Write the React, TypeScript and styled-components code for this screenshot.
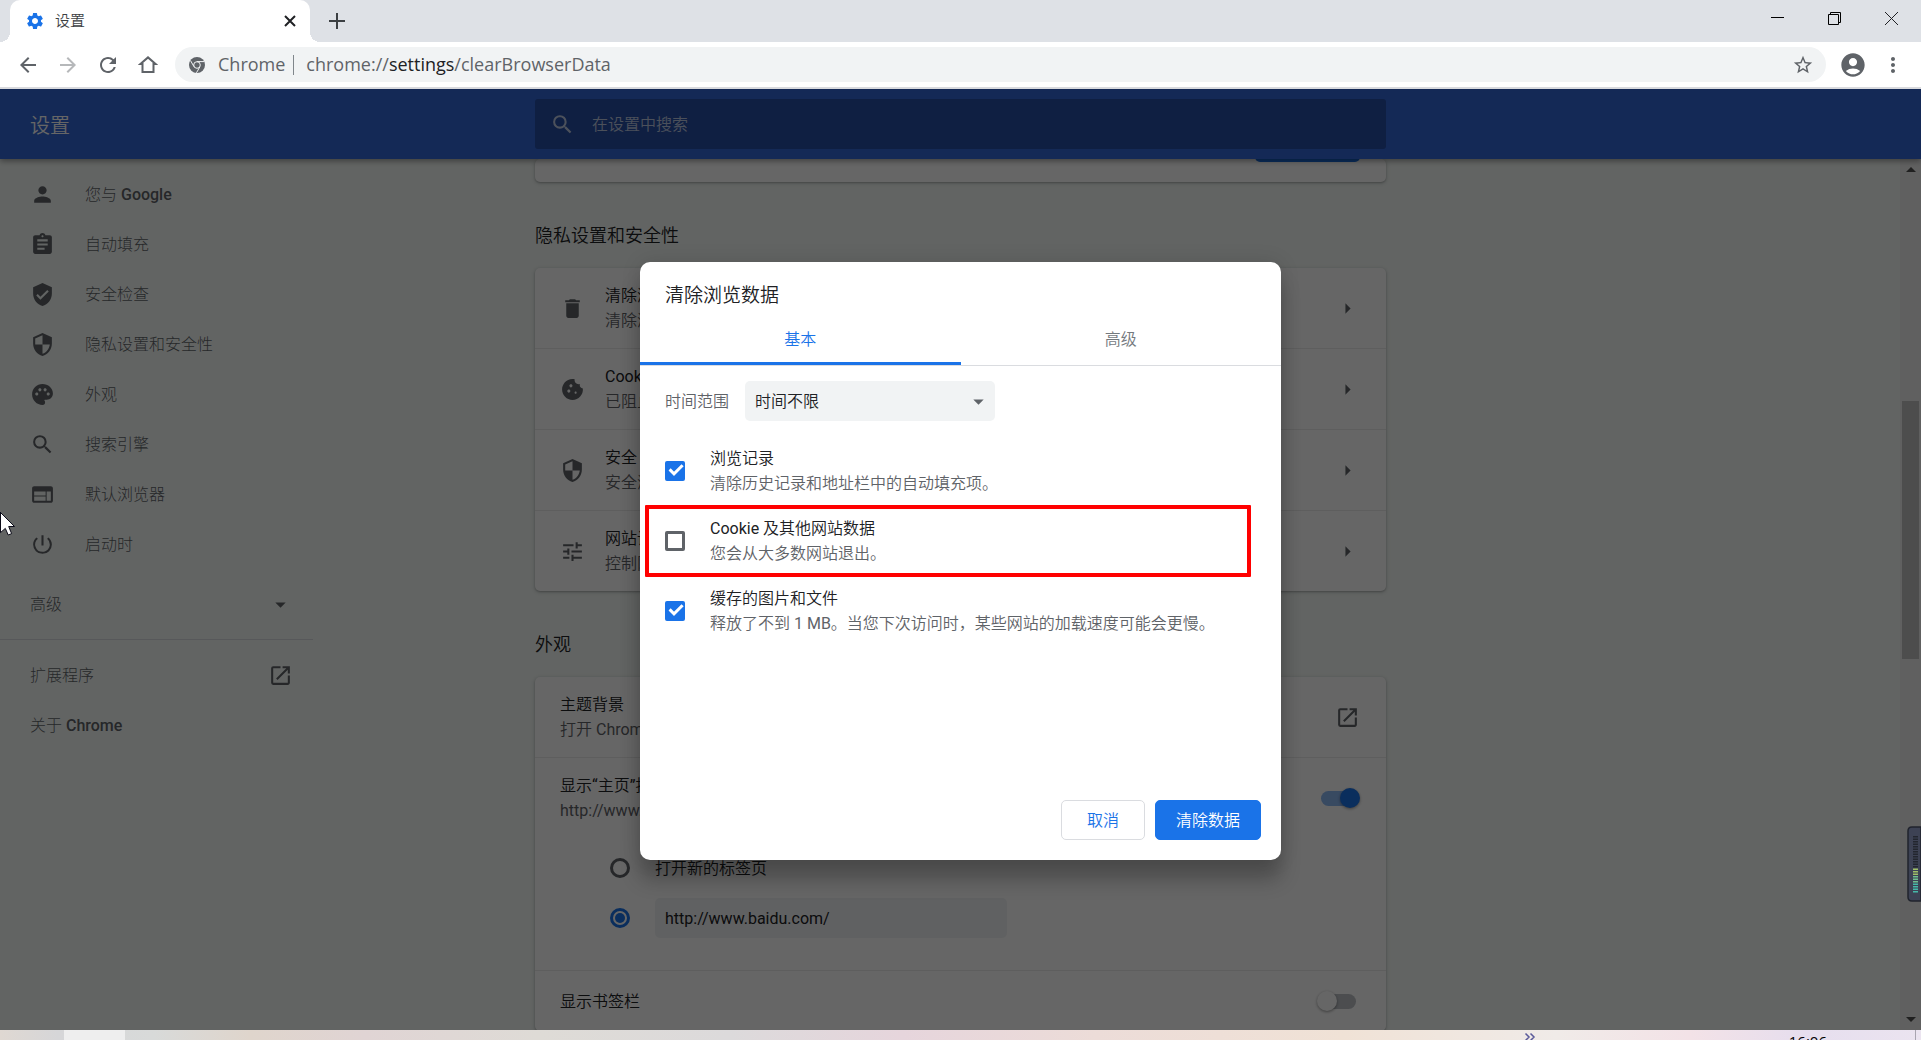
import React from "react";
import styled, { createGlobalStyle, css } from "styled-components";
import type { IconType } from "react-icons";
import {
  MdAccountCircle,
  MdArrowBack,
  MdArrowDropDown,
  MdArrowForward,
  MdArrowRight,
  MdAssignment,
  MdCookie,
  MdDelete,
  MdMoreVert,
  MdOpenInNew,
  MdPalette,
  MdPerson,
  MdPowerSettingsNew,
  MdRefresh,
  MdSearch,
  MdSecurity,
  MdSettings,
  MdStarBorder,
  MdTune,
  MdVerifiedUser,
  MdWeb,
} from "react-icons/md";

const color = {
  strip: "#dee1e6",
  chip: "#f1f3f4",
  ink: "#202124",
  muted: "#5f6368",
  blue: "#1a73e8",
  header: "#3367d6",
  page: "#f6fbf8",
  line: "#dadce0",
  rule: "#ececec",
};

const lightFont = `Roboto, "Noto Sans CJK SC Light", "Noto Sans CJK SC", sans-serif`;

const GlobalStyle = createGlobalStyle`
  *, *::before, *::after { box-sizing: border-box; }
  html, body, #root { height: 100%; }
  body {
    margin: 0;
    overflow: hidden;
    font-family: Roboto, "Noto Sans CJK SC DemiLight", "Noto Sans CJK SC", sans-serif;
    font-size: 16px;
    line-height: 25px;
    color: ${color.ink};
  }
  button, input, select { font: inherit; color: inherit; margin: 0; }
  button { padding: 0; border: 0; background: none; }
  h1, h2, p, ul { margin: 0; padding: 0; font-weight: 400; }
  ul { list-style: none; }
  svg { display: block; flex: none; }
`;

const Window = styled.div`
  position: relative;
  display: flex;
  flex-direction: column;
  height: 100vh;
  overflow: hidden;
`;

/* ---------- browser frame ---------- */

const TabStrip = styled.div`
  display: flex;
  flex: none;
  height: 42px;
  padding: 0 1px 0 10px;
  background: ${color.strip};
`;

const Tab = styled.div`
  position: relative;
  display: flex;
  align-items: center;
  gap: 10px;
  width: 300px;
  padding: 0 10px 0 15px;
  border-radius: 10px 10px 0 0;
  background: #fff;
  color: #3c4043;
  font-size: 15px;
  &::before,
  &::after {
    content: "";
    position: absolute;
    bottom: 0;
    width: 10px;
    height: 10px;
  }
  &::before {
    right: 100%;
    background: radial-gradient(circle at 0 0, transparent 10px, #fff 10px);
  }
  &::after {
    left: 100%;
    background: radial-gradient(circle at 100% 0, transparent 10px, #fff 10px);
  }
`;

const TabTitle = styled.span`
  flex: 1;
`;

const StripButton = styled.button<{ $width: number }>`
  display: grid;
  place-items: center;
  width: ${(p) => p.$width}px;
  height: ${(p) => (p.$width > 40 ? 36 : 42)}px;
`;

const NewTab = styled(StripButton)`
  margin-left: 12px;
`;

const WindowControls = styled.div`
  display: flex;
  margin-left: auto;
`;

const Toolbar = styled.div`
  display: flex;
  align-items: center;
  flex: none;
  height: 47px;
  padding: 0 8px;
  background: #fff;
  border-bottom: 2px solid #d9dade;
  color: ${color.muted};
`;

const ToolButton = styled.button<{ $faded?: boolean }>`
  display: grid;
  place-items: center;
  width: 40px;
  height: 40px;
  opacity: ${(p) => (p.$faded ? 0.45 : 1)};
`;

const Omnibox = styled.div`
  display: flex;
  align-items: center;
  flex: 1;
  height: 35px;
  margin: 0 7px;
  padding: 0 12px 0 14px;
  border-radius: 18px;
  background: ${color.chip};
  font-family: "Open Sans", "Noto Sans", sans-serif;
  font-size: 18px;
`;

const SiteName = styled.span`
  margin: 0 8px 0 13px;
`;

const SiteDivider = styled.span`
  width: 1px;
  height: 20px;
  margin-right: 12px;
  background: #80868b;
`;

const Url = styled.span`
  flex: 1;
  b {
    font-weight: 400;
    color: ${color.ink};
  }
`;

/* ---------- settings page ---------- */

const Page = styled.div`
  position: relative;
  display: flex;
  flex-direction: column;
  flex: 1;
  min-height: 0;
  overflow: hidden;
  background: ${color.page};
`;

const columns = css`
  display: grid;
  grid-template-columns: minmax(0, 1fr) minmax(0, 851px) minmax(0, 1fr);
`;

const Header = styled.header`
  ${columns}
  position: relative;
  z-index: 1;
  flex: none;
  align-items: center;
  height: 70px;
  background: ${color.header};
  box-shadow: 0 2px 6px rgba(0, 0, 0, 0.4);
  color: #fff;
`;

const PageTitle = styled.h1`
  padding: 4px 0 0 30px;
  font-size: 20px;
`;

const SearchBox = styled.label`
  display: flex;
  align-items: center;
  gap: 15px;
  height: 50px;
  padding: 0 15px;
  border-radius: 3px;
  background: #264ea5;
  color: rgba(255, 255, 255, 0.7);
  input {
    flex: 1;
    border: 0;
    outline: 0;
    background: none;
  }
  input::placeholder {
    color: inherit;
    opacity: 1;
  }
`;

const Body = styled.div`
  ${columns}
  flex: 1;
  min-height: 0;
`;

const Sidebar = styled.nav`
  width: 313px;
  padding-top: 10px;
  color: ${color.muted};
  font-family: ${lightFont};
  font-weight: 500;
`;

const NavLink = styled.a`
  display: flex;
  align-items: center;
  gap: 30px;
  height: 50px;
  padding: 0 20px 0 30px;
  color: inherit;
  text-decoration: none;
`;

const NavToggle = styled.button`
  display: flex;
  align-items: center;
  justify-content: space-between;
  width: 100%;
  height: 50px;
  margin: 10px 0;
  padding: 0 20px 0 30px;
  font-weight: 500;
`;

const NavFooter = styled.div`
  padding-top: 10px;
  border-top: 1px solid ${color.line};
  ${NavLink} {
    justify-content: space-between;
  }
`;

const Main = styled.main`
  height: 100%;
  min-height: 0;
`;

const Card = styled.section`
  border-radius: 5px;
  background: #fff;
  box-shadow: 0 1px 2px rgba(60, 64, 67, 0.3), 0 1px 4px 1px rgba(60, 64, 67, 0.15);
`;

const AccountCard = styled(Card)`
  display: flex;
  align-items: flex-end;
  justify-content: flex-end;
  height: 23px;
  padding: 0 26px 20px;
`;

const AccountButton = styled.button`
  flex: none;
  width: 105px;
  height: 40px;
  border-radius: 5px;
  background: ${color.blue};
`;

const SectionTitle = styled.h2`
  padding: 41px 0 19px;
  font-size: 18px;
  line-height: 26px;
`;

const Row = styled.div<{ $height?: number }>`
  display: flex;
  align-items: center;
  gap: 20px;
  height: ${(p) => p.$height ?? 80}px;
  padding: 0 26px 0 25px;
`;

const Item = styled.div`
  & + & {
    border-top: 1px solid ${color.rule};
  }
`;

const RowText = styled.div`
  flex: 1;
  p + p {
    color: ${color.muted};
  }
`;

const RowIcon = styled.span`
  color: ${color.muted};
`;

const Switch = styled.input`
  appearance: none;
  position: relative;
  width: 35px;
  height: 15px;
  margin-right: 4px;
  border-radius: 8px;
  background: #bdc1c6;
  &::after {
    content: "";
    position: absolute;
    top: -3px;
    left: -4px;
    width: 20px;
    height: 20px;
    border-radius: 50%;
    background: #fff;
    box-shadow: 0 1px 3px rgba(0, 0, 0, 0.4);
  }
  &:checked {
    background: #8cb8f3;
  }
  &:checked::after {
    left: 19px;
    background: ${color.blue};
  }
`;

const RadioList = styled.div`
  padding: 5px 0 27px 75px;
`;

const RadioRow = styled.div`
  display: flex;
  align-items: center;
  gap: 25px;
  height: 50px;
`;

const Radio = styled.input`
  appearance: none;
  display: grid;
  place-items: center;
  width: 20px;
  height: 20px;
  border: 3px solid ${color.muted};
  border-radius: 50%;
  &:checked {
    border-color: ${color.blue};
  }
  &:checked::after {
    content: "";
    width: 10px;
    height: 10px;
    border-radius: 50%;
    background: ${color.blue};
  }
`;

const UrlField = styled.input`
  width: 352px;
  height: 40px;
  padding: 0 10px;
  border: 0;
  border-radius: 5px;
  background: ${color.chip};
`;

const Scrollbar = styled.div`
  display: flex;
  flex-direction: column;
  align-items: center;
  justify-self: end;
  width: 21px;
  height: 100%;
  background: #f1f1f1;
  color: #505050;
`;

const Track = styled.div`
  display: grid;
  grid-template-rows: 221fr 258fr 350fr;
  flex: 1;
  width: 17px;
`;

const Thumb = styled.div`
  grid-row: 2;
  background: #c1c1c1;
`;

const ScrollArrow = styled.span`
  display: grid;
  place-items: center;
  height: 21px;
`;

/* ---------- dialog ---------- */

const Scrim = styled.div`
  position: absolute;
  inset: 0;
  z-index: 2;
  display: flex;
  align-items: flex-start;
  justify-content: center;
  padding-top: 173px;
  background: rgba(0, 0, 0, 0.6);
`;

const Dialog = styled.div`
  display: flex;
  flex-direction: column;
  width: 641px;
  min-height: 598px;
  border-radius: 10px;
  background: #fff;
  box-shadow: 0 0 20px rgba(0, 0, 0, 0.12), 0 20px 20px rgba(0, 0, 0, 0.24);
`;

const DialogTitle = styled.h2`
  padding: 21px 25px 9px;
  font-size: 19px;
  line-height: 26px;
`;

const Tabs = styled.div`
  display: flex;
  border-bottom: 1px solid ${color.line};
`;

const TabButton = styled.button<{ $active?: boolean }>`
  flex: 1;
  height: 47px;
  padding-bottom: 5px;
  color: ${(p) => (p.$active ? color.blue : "#74797e")};
  box-shadow: ${(p) => (p.$active ? `inset 0 -3px ${color.blue}` : "none")};
`;

const RangeRow = styled.div`
  display: flex;
  align-items: center;
  gap: 16px;
  padding: 15px 25px;
  color: ${color.muted};
`;

const SelectWrap = styled.div`
  display: grid;
  align-items: center;
  width: 250px;
  > * {
    grid-area: 1 / 1;
  }
  svg {
    justify-self: end;
    margin-right: 4px;
    pointer-events: none;
  }
`;

const Select = styled.select`
  appearance: none;
  height: 40px;
  padding: 0 10px;
  border: 0;
  border-radius: 5px;
  background: ${color.chip};
  color: ${color.ink};
`;

const CheckRow = styled.label`
  position: relative;
  display: flex;
  align-items: center;
  gap: 25px;
  height: 70px;
  padding: 0 25px;
`;

const CheckMark = styled.span`
  display: grid;
  place-items: center;
  > * {
    grid-area: 1 / 1;
  }
  svg {
    pointer-events: none;
  }
`;

const Checkbox = styled.input`
  appearance: none;
  width: 20px;
  height: 20px;
  border: 3px solid ${color.muted};
  border-radius: 2px;
  &:checked {
    border-color: ${color.blue};
    background: ${color.blue};
  }
`;

const Highlight = styled.span`
  position: absolute;
  inset: -1px 30px -1px 5px;
  border: 4px solid #f00;
  border-radius: 1px;
  pointer-events: none;
`;

const Actions = styled.div`
  display: flex;
  justify-content: flex-end;
  gap: 10px;
  margin-top: auto;
  padding: 20px;
`;

const ActionButton = styled.button<{ $primary?: boolean }>`
  height: 40px;
  padding: 0 ${(p) => (p.$primary ? 20 : 25)}px;
  border: 1px solid ${(p) => (p.$primary ? color.blue : color.line)};
  border-radius: 5px;
  background: ${(p) => (p.$primary ? color.blue : "#fff")};
  color: ${(p) => (p.$primary ? "#fff" : color.blue)};
  font-weight: 500;
`;

/* ---------- desktop ---------- */

const Taskbar = styled.footer`
  display: flex;
  flex: none;
  height: 10px;
  overflow: hidden;
  background: linear-gradient(
    90deg,
    #dfd8d2 0,
    #d6d6d8 3%,
    #d8dad9 8%,
    #dfd5cc 13%,
    #e0d4d4 19%,
    #dedbd6 28%,
    #dcdadb 38%,
    #e6d5dc 47%,
    #ecdcd8 57%,
    #f0e2d6 70%,
    #f0ebe8 81%,
    #f3e2e7 88%,
    #e6deee 94%,
    #ebe4f0 100%
  );
`;

const ActiveTask = styled.span`
  width: 61px;
  margin-left: 64px;
  background: #eee;
`;

const Tray = styled.div`
  display: flex;
  margin-left: auto;
`;

const TrayMore = styled.button`
  width: 12px;
  height: 10px;
`;

const Clock = styled.time`
  margin: 4px 88px 0 253px;
  font-family: "Open Sans", sans-serif;
  font-size: 15px;
  line-height: 15px;
  color: #000;
`;

const ShowDesktop = styled.span`
  width: 6px;
  border-left: 1px solid #a9a5b0;
`;

const MeterBox = styled.svg`
  position: absolute;
  z-index: 3;
  top: 826px;
  right: 0;
`;

const Pointer = styled.svg`
  position: absolute;
  z-index: 3;
  top: 512px;
  left: 0;
`;

/* ---------- drawings ---------- */

const HomeIcon = () => (
  <svg width="20" height="20" viewBox="0 0 20 20" fill="none" stroke="currentColor" strokeWidth="2">
    <path d="M4.5 17V9H2.4L10 2.4 17.6 9H15.5V17Z" />
  </svg>
);

const ChromeMark = () => (
  <svg width="16" height="16" viewBox="0 0 16 16">
    <circle cx="8" cy="8" r="8" fill="#5f6368" />
    <circle cx="8" cy="8" r="3.3" fill="none" stroke="#f1f3f4" strokeWidth="1" />
    <path d="M8 4.6h7.2M5 9.7 1.5 3.6M10.9 9.8 7.4 15.9" stroke="#f1f3f4" strokeWidth="1" />
  </svg>
);

const Cross = ({ size, width }: { size: number; width: number }) => (
  <svg width={size} height={size} viewBox={`0 0 ${size} ${size}`} stroke="#202124" strokeWidth={width}>
    <path d={`M1 1 ${size - 1} ${size - 1}M${size - 1} 1 1 ${size - 1}`} />
  </svg>
);

const Meter = () => (
  <MeterBox width="14" height="76" viewBox="0 0 14 76">
    <path d="M14 1H5Q1 1 1 5V71Q1 75 5 75H14Z" fill="#3d4254" stroke="#20232d" strokeWidth="1.5" />
    {Array.from({ length: 23 }, (_, i) => (
      <rect
        key={i}
        x="6"
        y={10 + i * 2.5}
        width="5"
        height="1.5"
        fill={i < 13 ? "#23262f" : i < 16 ? "#9fc068" : i < 19 ? "#6fc090" : "#45b9a8"}
      />
    ))}
  </MeterBox>
);

/* ---------- data ---------- */

const navItems: [IconType, string][] = [
  [MdPerson, "您与 Google"],
  [MdAssignment, "自动填充"],
  [MdVerifiedUser, "安全检查"],
  [MdSecurity, "隐私设置和安全性"],
  [MdPalette, "外观"],
  [MdSearch, "搜索引擎"],
  [MdWeb, "默认浏览器"],
  [MdPowerSettingsNew, "启动时"],
];

const privacyItems: [IconType, string, string][] = [
  [MdDelete, "清除浏览数据", "清除浏览数据"],
  [MdCookie, "Cookie", "已阻止"],
  [MdSecurity, "安全", "安全浏览"],
  [MdTune, "网站设置", "控制网站"],
];

const dataItems = [
  { title: "浏览记录", note: "清除历史记录和地址栏中的自动填充项。", on: true },
  { title: "Cookie 及其他网站数据", note: "您会从大多数网站退出。", on: false, marked: true },
  {
    title: "缓存的图片和文件",
    note: "释放了不到 1 MB。当您下次访问时，某些网站的加载速度可能会更慢。",
    on: true,
  },
];

const BrowserFrame = () => (
  <>
    <TabStrip>
      <Tab>
        <MdSettings size={20} color={color.blue} />
        <TabTitle>设置</TabTitle>
        <StripButton $width={20} aria-label="关闭标签页">
          <Cross size={12} width={2} />
        </StripButton>
      </Tab>
      <NewTab $width={30} aria-label="新标签页">
        <svg width="16" height="16" viewBox="0 0 16 16" stroke="#3c4043" strokeWidth="2">
          <path d="M8 0V16M0 8H16" />
        </svg>
      </NewTab>
      <WindowControls>
        <StripButton $width={57} aria-label="最小化">
          <svg width="13" height="13" viewBox="0 0 13 13" stroke="#000">
            <path d="M0 5.5H13" />
          </svg>
        </StripButton>
        <StripButton $width={57} aria-label="还原">
          <svg width="13" height="13" viewBox="0 0 13 13" fill="none" stroke="#000">
            <path d="M.5 2.5H10.5V12.5H.5ZM2.5 2.5V.5H12.5V10.5H10.5" />
          </svg>
        </StripButton>
        <StripButton $width={57} aria-label="关闭">
          <Cross size={15} width={1} />
        </StripButton>
      </WindowControls>
    </TabStrip>
    <Toolbar>
      <ToolButton aria-label="后退">
        <MdArrowBack size={24} />
      </ToolButton>
      <ToolButton $faded aria-label="前进">
        <MdArrowForward size={24} />
      </ToolButton>
      <ToolButton aria-label="重新加载">
        <MdRefresh size={24} />
      </ToolButton>
      <ToolButton aria-label="主页">
        <HomeIcon />
      </ToolButton>
      <Omnibox>
        <ChromeMark />
        <SiteName>Chrome</SiteName>
        <SiteDivider />
        <Url>
          chrome://<b>settings</b>/clearBrowserData
        </Url>
        <MdStarBorder size={22} />
      </Omnibox>
      <ToolButton aria-label="用户">
        <MdAccountCircle size={28} />
      </ToolButton>
      <ToolButton aria-label="菜单">
        <MdMoreVert size={24} />
      </ToolButton>
    </Toolbar>
  </>
);

const SideNav = () => (
  <Sidebar>
    {navItems.map(([Icon, label]) => (
      <NavLink key={label} href="#">
        <Icon size={25} />
        {label}
      </NavLink>
    ))}
    <NavToggle>
      高级
      <MdArrowDropDown size={25} />
    </NavToggle>
    <NavFooter>
      <NavLink href="#">
        扩展程序
        <MdOpenInNew size={25} />
      </NavLink>
      <NavLink href="#">关于 Chrome</NavLink>
    </NavFooter>
  </Sidebar>
);

const Settings = () => (
  <Main>
    <AccountCard>
      <AccountButton aria-label="开启同步功能" />
    </AccountCard>
    <SectionTitle>隐私设置和安全性</SectionTitle>
    <Card>
      {privacyItems.map(([Icon, title, note]) => (
        <Item key={title}>
          <Row>
            <RowIcon>
              <Icon size={25} />
            </RowIcon>
            <RowText>
              <p>{title}</p>
              <p>{note}</p>
            </RowText>
            <RowIcon>
              <MdArrowRight size={25} />
            </RowIcon>
          </Row>
        </Item>
      ))}
    </Card>
    <SectionTitle>外观</SectionTitle>
    <Card>
      <Item>
        <Row>
          <RowText>
            <p>主题背景</p>
            <p>打开 Chrome</p>
          </RowText>
          <RowIcon>
            <MdOpenInNew size={25} />
          </RowIcon>
        </Row>
      </Item>
      <Item>
        <Row>
          <RowText>
            <p>显示“主页”按钮</p>
            <p>http://www.baidu.com/</p>
          </RowText>
          <Switch type="checkbox" defaultChecked aria-label="显示“主页”按钮" />
        </Row>
        <RadioList>
          <RadioRow>
            <Radio type="radio" name="home" id="home-new" />
            <label htmlFor="home-new">打开新的标签页</label>
          </RadioRow>
          <RadioRow>
            <Radio type="radio" name="home" defaultChecked aria-label="自定义网址" />
            <UrlField defaultValue="http://www.baidu.com/" aria-label="网址" />
          </RadioRow>
        </RadioList>
      </Item>
      <Item>
        <Row $height={60}>
          <RowText>
            <p>显示书签栏</p>
          </RowText>
          <Switch type="checkbox" aria-label="显示书签栏" />
        </Row>
      </Item>
    </Card>
  </Main>
);

const ClearDataDialog = () => (
  <Scrim>
    <Dialog role="dialog" aria-label="清除浏览数据">
      <DialogTitle>清除浏览数据</DialogTitle>
      <Tabs>
        <TabButton $active>基本</TabButton>
        <TabButton>高级</TabButton>
      </Tabs>
      <RangeRow>
        <label htmlFor="range">时间范围</label>
        <SelectWrap>
          <Select id="range">
            <option>时间不限</option>
          </Select>
          <MdArrowDropDown size={25} color={color.muted} />
        </SelectWrap>
      </RangeRow>
      {dataItems.map((item) => (
        <CheckRow key={item.title}>
          <CheckMark>
            <Checkbox type="checkbox" defaultChecked={item.on} />
            {item.on && (
              <svg width="20" height="20" viewBox="0 0 20 20" fill="none" stroke="#fff" strokeWidth="3">
                <path d="M4.6 8.4 9 12.8 17.6 4.2" />
              </svg>
            )}
          </CheckMark>
          <RowText>
            <p>{item.title}</p>
            <p>{item.note}</p>
          </RowText>
          {item.marked && <Highlight />}
        </CheckRow>
      ))}
      <Actions>
        <ActionButton>取消</ActionButton>
        <ActionButton $primary>清除数据</ActionButton>
      </Actions>
    </Dialog>
  </Scrim>
);

export default function App() {
  return (
    <Window>
      <GlobalStyle />
      <BrowserFrame />
      <Page>
        <Header>
          <PageTitle>设置</PageTitle>
          <SearchBox>
            <MdSearch size={25} />
            <input placeholder="在设置中搜索" aria-label="在设置中搜索" />
          </SearchBox>
        </Header>
        <Body>
          <SideNav />
          <Settings />
          <Scrollbar>
            <ScrollArrow>
              <svg width="10" height="5" viewBox="0 0 10 5" fill="currentColor">
                <path d="M5 0 10 5H0Z" />
              </svg>
            </ScrollArrow>
            <Track>
              <Thumb />
            </Track>
            <ScrollArrow>
              <svg width="10" height="5" viewBox="0 0 10 5" fill="currentColor">
                <path d="M0 0H10L5 5Z" />
              </svg>
            </ScrollArrow>
          </Scrollbar>
        </Body>
        <ClearDataDialog />
      </Page>
      <Taskbar>
        <ActiveTask />
        <Tray>
          <TrayMore aria-label="更多">
            <svg width="12" height="10" viewBox="0 0 12 10" fill="none" stroke="#5a5a9a" strokeWidth="1.5">
              <path d="M1.5 3.5 5 7 1.5 10.5M6.5 3.5 10 7 6.5 10.5" />
            </svg>
          </TrayMore>
          <Clock>16:06</Clock>
          <ShowDesktop />
        </Tray>
      </Taskbar>
      <Meter />
      <Pointer width="16" height="26" viewBox="0 0 16 26">
        <path
          d="M-3 -3 14.5 14.5H8.7L11.6 21.6 8.2 23 5.3 16.4 .5 20.6V.5Z"
          fill="#fff"
          stroke="#0b0b18"
          strokeWidth="1"
        />
      </Pointer>
    </Window>
  );
}
